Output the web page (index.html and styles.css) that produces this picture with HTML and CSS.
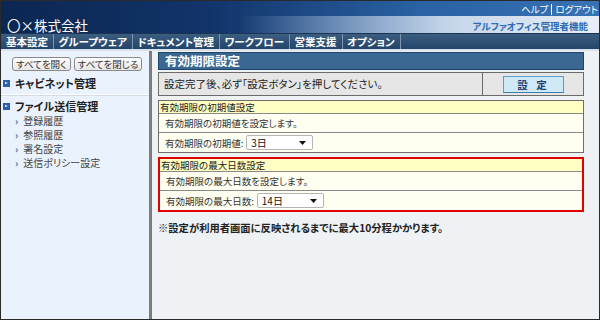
FILE: index.html
```html
<!DOCTYPE html>
<html lang="ja">
<head>
    <meta charset="UTF-8">
    <title>有効期限設定</title>
    <link rel="stylesheet" href="styles.css">
</head>
<body>
<div class="frame">
    <!-- header -->
    <div class="top">
        <div class="logo">〇×株式会社</div>
        <div class="links"><a>ヘルプ</a><span class="bar"></span><a>ログアウト</a></div>
        <div class="sysname">アルファオフィス管理者機能</div>
    </div>

    <!-- global menu -->
    <ul class="gnav">
        <li>基本設定</li>
        <li>グループウェア</li>
        <li>ドキュメント管理</li>
        <li>ワークフロー</li>
        <li>営業支援</li>
        <li>オプション</li>
    </ul>

    <div class="body">
        <div class="side">
            <div class="btns">
                <button class="sbtn">すべてを開く</button>
                <button class="sbtn">すべてを閉じる</button>
            </div>
            <div class="group">
                <div class="ghead"><span class="mark"></span>キャビネット管理</div>
            </div>
            <div class="group open">
                <div class="ghead"><span class="mark"></span>ファイル送信管理</div>
                <ul class="sub">
                    <li>登録履歴</li>
                    <li>参照履歴</li>
                    <li>署名設定</li>
                    <li>送信ポリシー設定</li>
                </ul>
            </div>
        </div>

        <div class="content">
            <h1 class="ttl">有効期限設定</h1>
            <div class="notice">
                <div class="msg">設定完了後、必ず「設定ボタン」を押してください。</div>
                <div class="act"><button class="setbtn">設 定</button></div>
            </div>

            <div class="sec">
                <div class="shead">有効期限の初期値設定</div>
                <div class="row">有効期限の初期値を設定します。</div>
                <div class="row">有効期限の初期値:
                    <span class="sel">3日<svg width="7" height="4" viewBox="0 0 7 4"><path d="M0 0h7L3.5 4z" fill="#111"/></svg></span>
                </div>
            </div>

            <div class="sec hl">
                <div class="shead">有効期限の最大日数設定</div>
                <div class="row">有効期限の最大日数を設定します。</div>
                <div class="row">有効期限の最大日数:
                    <span class="sel">14日<svg width="7" height="4" viewBox="0 0 7 4"><path d="M0 0h7L3.5 4z" fill="#111"/></svg></span>
                </div>
            </div>

            <p class="note">※設定が利用者画面に反映されるまでに最大10分程かかります。</p>
        </div>
    </div>
</div>
</body>
</html>
```

FILE: styles.css
```css
body
{
    margin: 0;
    font-family: "Noto Sans CJK JP", "DejaVu Sans", sans-serif;
    font-feature-settings: "palt";
    color: #333;
}
.frame
{
    width: 600px;
    height: 320px;
    box-sizing: border-box;
    border: 1px solid #2a2a2a;
    display: flex;
    flex-direction: column;
    overflow: hidden;
}

/* header */
.top
{
    height: 32px;
    position: relative;
    background:
        linear-gradient(90deg, rgba(232,238,246,0) 40%, rgba(214,226,240,.9) 75%, #e8eef6 100%) 0 15px / 100% 17px no-repeat,
        linear-gradient(90deg, #0b2651 0%, #12346a 35%, #2a62a3 70%, #3672b4 100%);
}
.logo
{
    position: absolute;
    left: 6px;
    top: 16px;
    color: #fff;
    font-size: 13.5px;
    line-height: 16px;
}
.links
{
    position: absolute;
    right: 1px;
    top: 2px;
    font-size: 9.5px;
    line-height: 12px;
    color: #fff;
    display: flex;
    align-items: center;
    gap: 3px;
}
.links .bar
{
    width: 1px;
    height: 11px;
    background: #fff;
}
.sysname
{
    position: absolute;
    right: 11px;
    top: 19px;
    font-size: 9.5px;
    line-height: 12px;
    font-weight: bold;
    color: #2f6cb5;
}

/* global menu */
.gnav
{
    margin: 0;
    padding: 0;
    list-style: none;
    display: flex;
    height: 15px;
    background: linear-gradient(#3b5d80, #24456a);
    border-top: 1px solid #1b3354;
    border-bottom: 2px solid #d9e2ec;
}
.gnav li
{
    font-size: 10.5px;
    line-height: 15px;
    font-weight: bold;
    color: #fff;
    padding: 0 5px 0 4.5px;
    border-right: 1px solid #7f95ad;
}
.gnav li:first-child
{
    padding-left: 5px;
}

.body
{
    flex: 1;
    display: grid;
    grid-template-columns: 151px 1fr;
}

/* side menu */
.side
{
    background: #eaf2fd;
    border-right: 3px solid #7d7d7d;
    padding-top: 6px;
}
.btns
{
    display: flex;
    gap: 3px;
    padding-left: 11px;
}
.sbtn
{
    font-family: inherit;
    font-feature-settings: "palt";
    font-size: 9.5px;
    line-height: 12px;
    height: 14px;
    padding: 0 3px;
    white-space: nowrap;
    color: #333;
    background: linear-gradient(#fff, #e6e6e6);
    border: 1px solid #8a8a8a;
    border-radius: 3px;
}
.group
{
    border-bottom: 1px solid #fff;
    box-shadow: 0 1px 0 #d3dbe6;
    padding: 5px 0 4px 2px;
}
.group:first-of-type
{
    margin-top: 3px;
}
.group.open
{
    border: none;
    box-shadow: none;
    padding-top: 4px;
}
.group.open .ghead
{
    margin-bottom: 1px;
}
.ghead
{
    font-size: 11px;
    line-height: 14px;
    font-weight: bold;
    color: #222;
    display: flex;
    align-items: center;
    gap: 5px;
}
.mark
{
    width: 7px;
    height: 7px;
    background: #2a5ea8;
    position: relative;
}
.mark::after
{
    content: "";
    position: absolute;
    left: 2px;
    top: 2px;
    border-left: 3px solid #fff;
    border-top: 1.5px solid transparent;
    border-bottom: 1.5px solid transparent;
}
.sub
{
    margin: 0;
    padding: 0 0 0 12px;
    list-style: none;
}
.sub li
{
    font-size: 10px;
    line-height: 14px;
    color: #444;
}
.sub li::before
{
    content: "›";
    color: #3a6fb0;
    font-weight: bold;
    margin-right: 5px;
}

/* content */
.content
{
    background: #eef2f5;
    padding: 1px 15px 0 6px;
}
.ttl
{
    margin: 0;
    height: 16px;
    background: #3a6893;
    border: 1px solid #1f4466;
    color: #fff;
    font-size: 12.5px;
    line-height: 16px;
    padding-left: 6px;
}
.notice
{
    margin-top: 2px;
    display: flex;
    border: 1px solid #6b6b6b;
    background: #e6e6e6;
    height: 22px;
}
.msg
{
    flex: 1;
    font-size: 10.5px;
    line-height: 22px;
    padding-left: 5px;
    color: #222;
}
.act
{
    width: 100px;
    border-left: 1px solid #6b6b6b;
    display: flex;
    justify-content: center;
    align-items: center;
}
.setbtn
{
    width: 61px;
    height: 17px;
    padding: 0;
    font-family: inherit;
    font-size: 10.5px;
    font-weight: bold;
    color: #1d3f75;
    background: #cfeaf6;
    border: 1px solid #5e9cc7;
    border-bottom-color: #3b7eb0;
    letter-spacing: 3px;
    margin-left: 1px;
}

.sec
{
    margin-top: 4px;
    border: 1px solid #6e6e6e;
    background: #fffff1;
}
.sec.hl
{
    border: 2px solid #e00000;
}
.shead
{
    background: #ffffc3;
    font-size: 9.5px;
    line-height: 12px;
    height: 12px;
    padding-left: 1px;
    color: #222;
    border-bottom: 1px solid #8a8a8a;
}
.row
{
    font-size: 9.5px;
    height: 18px;
    line-height: 18px;
    padding-left: 6px;
    display: flex;
    align-items: center;
    gap: 3px;
    color: #333;
}
.row + .row
{
    border-top: 1px solid #8a8a8a;
    height: 19px;
}
.sel
{
    display: inline-flex;
    justify-content: space-between;
    align-items: center;
    box-sizing: border-box;
    width: 67px;
    height: 15px;
    padding: 0 6px 0 4px;
    background: #fff;
    border: 1px solid #b5b5b5;
    border-radius: 2px;
    font-size: 10px;
    color: #111;
}
.note
{
    margin: 8px 0 0;
    font-size: 10.3px;
    font-weight: bold;
    color: #222;
}
```
